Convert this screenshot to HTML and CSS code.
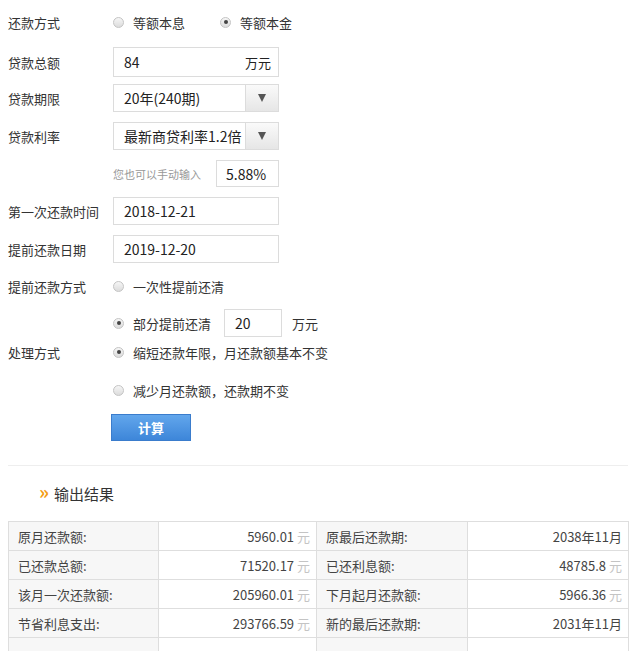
FILE: index.html
```html
<!DOCTYPE html>
<html lang="zh">
<head>
<meta charset="utf-8">
<title>提前还款计算器</title>
<link rel="stylesheet" href="styles.css">
</head>
<body>
<div class="page">
  <form class="form">
    <div class="row r1">
      <span class="label">还款方式</span>
      <span class="radio"><i class="dot"></i>等额本息</span>
      <span class="radio on gap"><i class="dot"></i>等额本金</span>
    </div>
    <div class="row r2">
      <span class="label">贷款总额</span>
      <div class="box tall"><span class="val">84</span><span class="unit">万元</span></div>
    </div>
    <div class="row r3">
      <span class="label">贷款期限</span>
      <div class="box sel"><span class="val">20年(240期)</span><span class="arrow"><i></i></span></div>
    </div>
    <div class="row r4">
      <span class="label">贷款利率</span>
      <div class="box sel"><span class="val">最新商贷利率1.2倍</span><span class="arrow"><i></i></span></div>
    </div>
    <div class="row r5">
      <span class="label"></span>
      <span class="hint">您也可以手动输入</span>
      <div class="box rate"><span class="val">5.88%</span></div>
    </div>
    <div class="row r6">
      <span class="label">第一次还款时间</span>
      <div class="box"><span class="val">2018-12-21</span></div>
    </div>
    <div class="row r7">
      <span class="label">提前还款日期</span>
      <div class="box"><span class="val">2019-12-20</span></div>
    </div>
    <div class="row r8">
      <span class="label">提前还款方式</span>
      <span class="radio"><i class="dot"></i>一次性提前还清</span>
    </div>
    <div class="row r9">
      <span class="label"></span>
      <span class="radio on"><i class="dot"></i>部分提前还清</span>
      <div class="box part"><span class="val">20</span></div>
      <span class="after">万元</span>
    </div>
    <div class="row r10">
      <span class="label">处理方式</span>
      <span class="radio on"><i class="dot"></i>缩短还款年限，月还款额基本不变</span>
    </div>
    <div class="row r11">
      <span class="label"></span>
      <span class="radio"><i class="dot"></i>减少月还款额，还款期不变</span>
    </div>
    <div class="row r12">
      <span class="label"></span>
      <span class="btn">计算</span>
    </div>
  </form>
  <div class="sep"></div>
  <h2 class="title"><span class="chev">»</span>输出结果</h2>
  <table class="result">
    <colgroup><col class="c1"><col class="c2"><col class="c3"><col class="c4"></colgroup>
    <tr><td class="k">原月还款额:</td><td class="v">5960.01 <em>元</em></td><td class="k">原最后还款期:</td><td class="v">2038年11月</td></tr>
    <tr><td class="k">已还款总额:</td><td class="v">71520.17 <em>元</em></td><td class="k">已还利息额:</td><td class="v">48785.8 <em>元</em></td></tr>
    <tr><td class="k">该月一次还款额:</td><td class="v">205960.01 <em>元</em></td><td class="k">下月起月还款额:</td><td class="v">5966.36 <em>元</em></td></tr>
    <tr><td class="k">节省利息支出:</td><td class="v">293766.59 <em>元</em></td><td class="k">新的最后还款期:</td><td class="v">2031年11月</td></tr>
    <tr><td class="k">&nbsp;</td><td class="v"></td><td class="k"></td><td class="v"></td></tr>
  </table>
</div>
</body>
</html>
```
FILE: styles.css
```css
html, body {
  margin: 0;
  padding: 0;
  background: #fff;
}
body {
  font-family: "Noto Sans CJK SC", "Noto Sans", sans-serif;
  font-size: 13px;
  color: #333;
  width: 640px;
  height: 651px;
  overflow: hidden;
}
.page {
  padding: 8px 12px 0 8px;
}
.form {
  display: flex;
  flex-direction: column;
  margin: 0;
}
.row {
  display: flex;
  align-items: center;
  height: 28px;
}
.r2 { margin-top: 11px; height: 30px; }
.r3 { margin-top: 7px; }
.r4 { margin-top: 10px; }
.r5 { margin-top: 10px; height: 27px; }
.r6 { margin-top: 10px; }
.r7 { margin-top: 10px; }
.r8 { margin-top: 9px; }
.r9 { margin-top: 9px; }
.r10 { margin-top: 1px; }
.r11 { margin-top: 10px; }
.r12 { margin-top: 10px; height: 27px; }

.label {
  width: 105px;
  flex: none;
  color: #333;
}
.radio {
  display: flex;
  align-items: center;
  color: #333;
}
.radio.gap { margin-left: 35px; }
.dot {
  width: 11px;
  height: 11px;
  box-sizing: border-box;
  border-radius: 50%;
  border: 1px solid #c4c4c4;
  background: linear-gradient(#f6f6f6, #dcdcdc);
  margin: 0 9px 0 0;
  position: relative;
  flex: none;
}
.radio.on .dot::after {
  content: "";
  position: absolute;
  left: 2.5px;
  top: 2.5px;
  width: 4px;
  height: 4px;
  border-radius: 50%;
  background: #444;
}
.box {
  width: 166px;
  height: 100%;
  box-sizing: border-box;
  border: 1px solid #dcdcdc;
  display: flex;
  align-items: center;
  justify-content: space-between;
  padding-left: 10px;
  background: #fff;
  font-size: 14px;
  color: #222;
}
.box .val { white-space: nowrap; }
.unit {
  padding-right: 7px;
  font-size: 13px;
}
.sel { padding-right: 0; }
.arrow {
  width: 32px;
  height: 100%;
  border-left: 1px solid #dcdcdc;
  background: linear-gradient(#fafafa, #e6e6e6);
  display: flex;
  align-items: center;
  justify-content: center;
}
.arrow i {
  width: 0;
  height: 0;
  border-left: 4.5px solid transparent;
  border-right: 4.5px solid transparent;
  border-top: 8px solid #555;
}
.hint {
  color: #999;
  font-size: 11px;
  width: 103px;
}
.box.rate {
  width: 63px;
  padding-left: 9px;
}
.box.part {
  width: 58px;
  margin-left: 13px;
  padding-left: 10px;
}
.after {
  margin-left: 10px;
}
.btn {
  width: 80px;
  height: 27px;
  box-sizing: border-box;
  margin-left: -2px;
  border: 1px solid #3a7ccc;
  background: linear-gradient(#62a6ec, #3d86d9);
  color: #fff;
  font-weight: bold;
  font-size: 13px;
  display: flex;
  align-items: center;
  justify-content: center;
}
.sep {
  margin-top: 24px;
  height: 1px;
  background: #eeeeee;
  width: 620px;
}
.title {
  margin: 0;
  height: 55px;
  display: flex;
  align-items: center;
  padding-left: 31px;
  font-weight: normal;
  font-size: 15px;
  color: #333;
}
.chev {
  color: #f39c12;
  font-weight: bold;
  font-size: 19px;
  margin-right: 5px;
  position: relative;
  top: -3px;
}
.result {
  width: 620px;
  border-collapse: collapse;
  table-layout: fixed;
  font-size: 13px;
}
.c1 { width: 150px; }
.c2 { width: 158px; }
.c3 { width: 151px; }
.c4 { width: 161px; }
.result td {
  height: 28px;
  padding: 0;
  border: 1px solid #dedede;
  white-space: nowrap;
}
.result .k {
  background: #f7f7f7;
  color: #444;
  padding-left: 9px;
}
.result .v {
  background: #fff;
  text-align: right;
  padding-right: 6px;
  color: #444;
}
.result em {
  font-style: normal;
  color: #c4c4c4;
}
```
